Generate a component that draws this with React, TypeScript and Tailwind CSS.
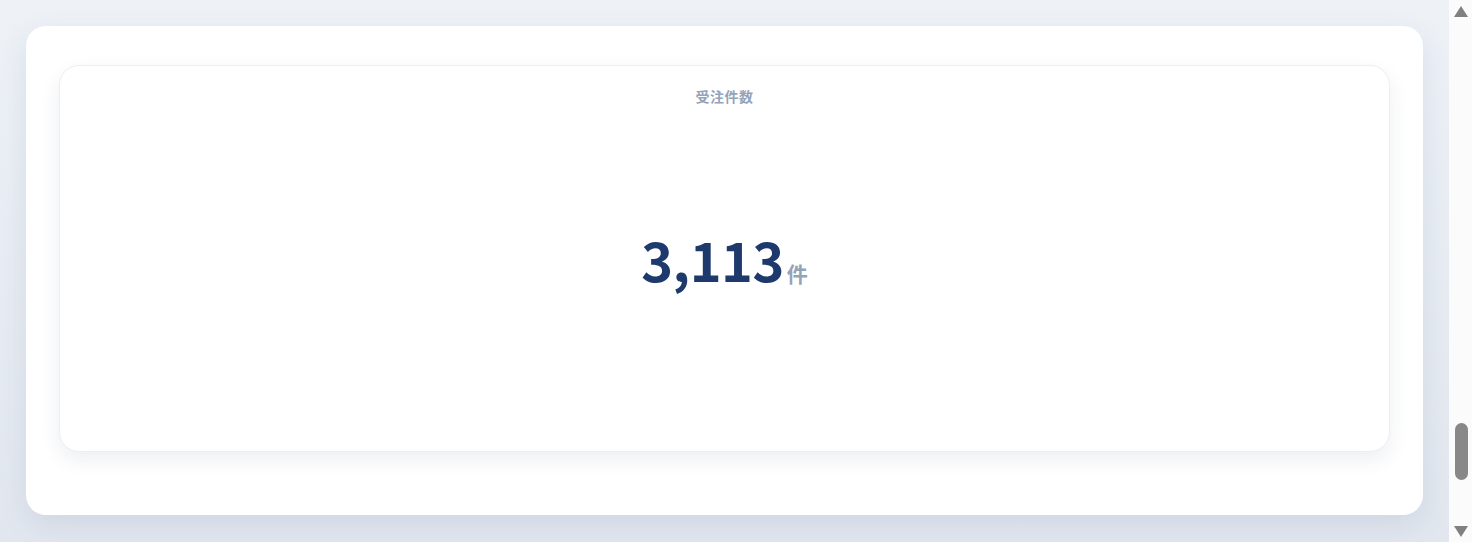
import React from "react";

const FONT = { fontFamily: '"Noto Sans CJK JP", "Noto Sans", sans-serif' };

const StatCard = ({ label, value, unit }: { label: string; value: string; unit: string }) => {
  return (
    <div className="flex h-[387px] flex-col rounded-[20px] border border-[#eceef2] bg-white shadow-[0_8px_20px_rgba(30,50,90,0.08)]">
      <div className="pt-[20px] text-center text-[14px] font-bold leading-5 tracking-[0.5px] text-[#94a3b8]">{label}</div>
      <div className="flex flex-1 items-baseline justify-center pt-[126px]">
        <span className="text-[54px] font-bold leading-none tracking-[-0.5px] text-[#1e3a6d]">{value}</span>
        <span className="ml-[3px] text-[21px] font-bold leading-none text-[#94a3b8]">{unit}</span>
      </div>
    </div>
  );
};

// the window's classic scrollbar, scrolled near the bottom
const Scrollbar = () => (
  <div className="flex h-full w-[23px] shrink-0 flex-col items-center bg-[#fbfbfb]">
    <svg width="14" height="11" viewBox="0 0 14 11" className="mt-[6px]">
      <path d="M7 0 L14 11 L0 11 Z" fill="#808080" />
    </svg>
    <div className="flex-1" />
    <div className="ml-[1px] h-[57px] w-[13px] rounded-full bg-[#888]" />
    <div className="h-[46px]" />
    <svg width="14" height="11" viewBox="0 0 14 11" className="mb-[5px]">
      <path d="M0 0 L14 0 L7 11 Z" fill="#808080" />
    </svg>
  </div>
);

export default function App() {
  return (
    <div style={FONT} className="flex h-screen overflow-hidden">
      <div className="h-full flex-1 bg-gradient-to-b from-[#eef2f7] to-[#e2e7ef] px-[26px] pt-[26px]">
        <div className="h-[489px] rounded-[20px] bg-white px-[33px] pt-[39px] shadow-[0_10px_30px_rgba(40,70,120,0.10)]">
          <StatCard label="受注件数" value="3,113" unit="件" />
        </div>
      </div>
      <Scrollbar />
    </div>
  );
}
